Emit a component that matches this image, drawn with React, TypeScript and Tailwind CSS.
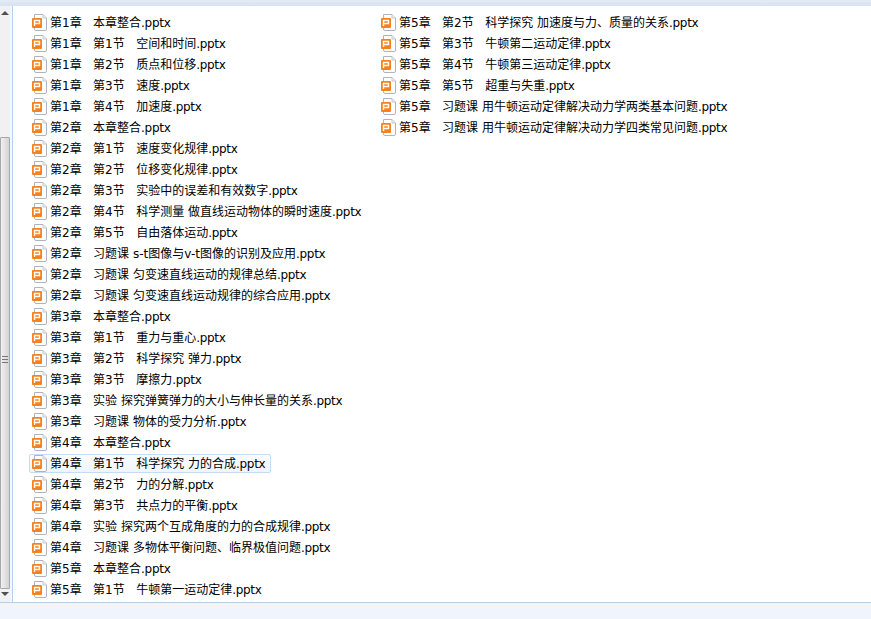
const columnOne = [
  '第1章   本章整合',
  '第1章   第1节   空间和时间',
  '第1章   第2节   质点和位移',
  '第1章   第3节   速度',
  '第1章   第4节   加速度',
  '第2章   本章整合',
  '第2章   第1节   速度变化规律',
  '第2章   第2节   位移变化规律',
  '第2章   第3节   实验中的误差和有效数字',
  '第2章   第4节   科学测量 做直线运动物体的瞬时速度',
  '第2章   第5节   自由落体运动',
  '第2章   习题课 s-t图像与v-t图像的识别及应用',
  '第2章   习题课 匀变速直线运动的规律总结',
  '第2章   习题课 匀变速直线运动规律的综合应用',
  '第3章   本章整合',
  '第3章   第1节   重力与重心',
  '第3章   第2节   科学探究 弹力',
  '第3章   第3节   摩擦力',
  '第3章   实验 探究弹簧弹力的大小与伸长量的关系',
  '第3章   习题课 物体的受力分析',
  '第4章   本章整合',
  '第4章   第1节   科学探究 力的合成',
  '第4章   第2节   力的分解',
  '第4章   第3节   共点力的平衡',
  '第4章   实验 探究两个互成角度的力的合成规律',
  '第4章   习题课 多物体平衡问题、临界极值问题',
  '第5章   本章整合',
  '第5章   第1节   牛顿第一运动定律',
];

const columnTwo = [
  '第5章   第2节   科学探究 加速度与力、质量的关系',
  '第5章   第3节   牛顿第二运动定律',
  '第5章   第4节   牛顿第三运动定律',
  '第5章   第5节   超重与失重',
  '第5章   习题课 用牛顿运动定律解决动力学两类基本问题',
  '第5章   习题课 用牛顿运动定律解决动力学四类常见问题',
];

function PptIcon() {
  return (
    <svg width="16" height="17" viewBox="0 0 16 17" className="shrink-0">
      <path d="M2.5 0.5H11L14.5 4V15a1.5 1.5 0 0 1-1.5 1.5H4a1.5 1.5 0 0 1-1.5-1.5Z" fill="#fff" stroke="#aeb3bf" />
      <path d="M11 0.5V4H14.5" fill="#eceef2" stroke="#c6c9d0" />
      <rect x="0" y="4" width="10" height="10" rx="1" fill="#f5821f" />
      <path d="M2.5 12V6.5H7.5V9.5H3" fill="none" stroke="#fff" strokeWidth="1.4" />
    </svg>
  );
}

function FileRow({ name, selected }: { name: string; selected?: boolean }) {
  return (
    <div
      className={`flex h-[19px] w-fit items-center gap-[2px] rounded-[2px] border pl-[2px] pr-[5px] ${
        selected ? 'border-[#c4dcf5] bg-gradient-to-b from-[#fafcff] to-[#eef5fd]' : 'border-transparent'
      }`}
    >
      <PptIcon />
      <span className="mt-[2px] whitespace-pre text-[12px] leading-[17px] text-black">
        {name}
        <span className="tracking-[-0.3px]">.pptx</span>
      </span>
    </div>
  );
}

function Scrollbar() {
  return (
    <div className="flex w-[10px] shrink-0 flex-col bg-[#f1f1f1]">
      <div className="flex h-[14px] items-center justify-center">
        <div className="h-0 w-0 border-x-[4px] border-b-[4px] border-x-transparent border-b-[#505050]" />
      </div>
      <div className="h-[117px]" />
      <div className="relative flex-1 rounded-[1px] border border-[#a9a9a9] bg-gradient-to-r from-[#f0f0f0] to-[#d4d4d4]">
        <div className="absolute left-[1px] right-[1px] top-[218px] flex flex-col gap-[2px]">
          <div className="h-[1px] bg-[#777]" />
          <div className="h-[1px] bg-[#777]" />
          <div className="h-[1px] bg-[#777]" />
        </div>
      </div>
      <div className="flex h-[13px] items-start justify-center pt-[3px]">
        <div className="h-0 w-0 border-x-[4px] border-t-[4px] border-x-transparent border-t-[#505050]" />
      </div>
    </div>
  );
}

export default function App() {
  return (
    <div className="flex h-[619px] w-[871px] flex-col overflow-hidden bg-[#f0f4fc] font-['DejaVu_Sans','Noto_Sans_CJK_SC',sans-serif]">
      <div className="h-[6px] shrink-0 bg-gradient-to-b from-[#e3ebf5] to-[#d6e3f2]" />
      <div className="flex h-[597px] shrink-0 border-b border-[#b9cfe6]">
        <Scrollbar />
        <div className="w-[2px] shrink-0 bg-[#f5f7fa]" />
        <div className="w-[1px] shrink-0 bg-[#b9d0e8]" />
        <div className="flex flex-1 gap-0 bg-white pl-[16px] pt-[7px]">
          <div className="flex w-[349px] flex-col gap-[2px]">
            {columnOne.map((name, i) => (
              <FileRow key={name} name={name} selected={i === 21} />
            ))}
          </div>
          <div className="flex flex-col gap-[2px]">
            {columnTwo.map((name) => (
              <FileRow key={name} name={name} />
            ))}
          </div>
        </div>
      </div>
    </div>
  );
}
